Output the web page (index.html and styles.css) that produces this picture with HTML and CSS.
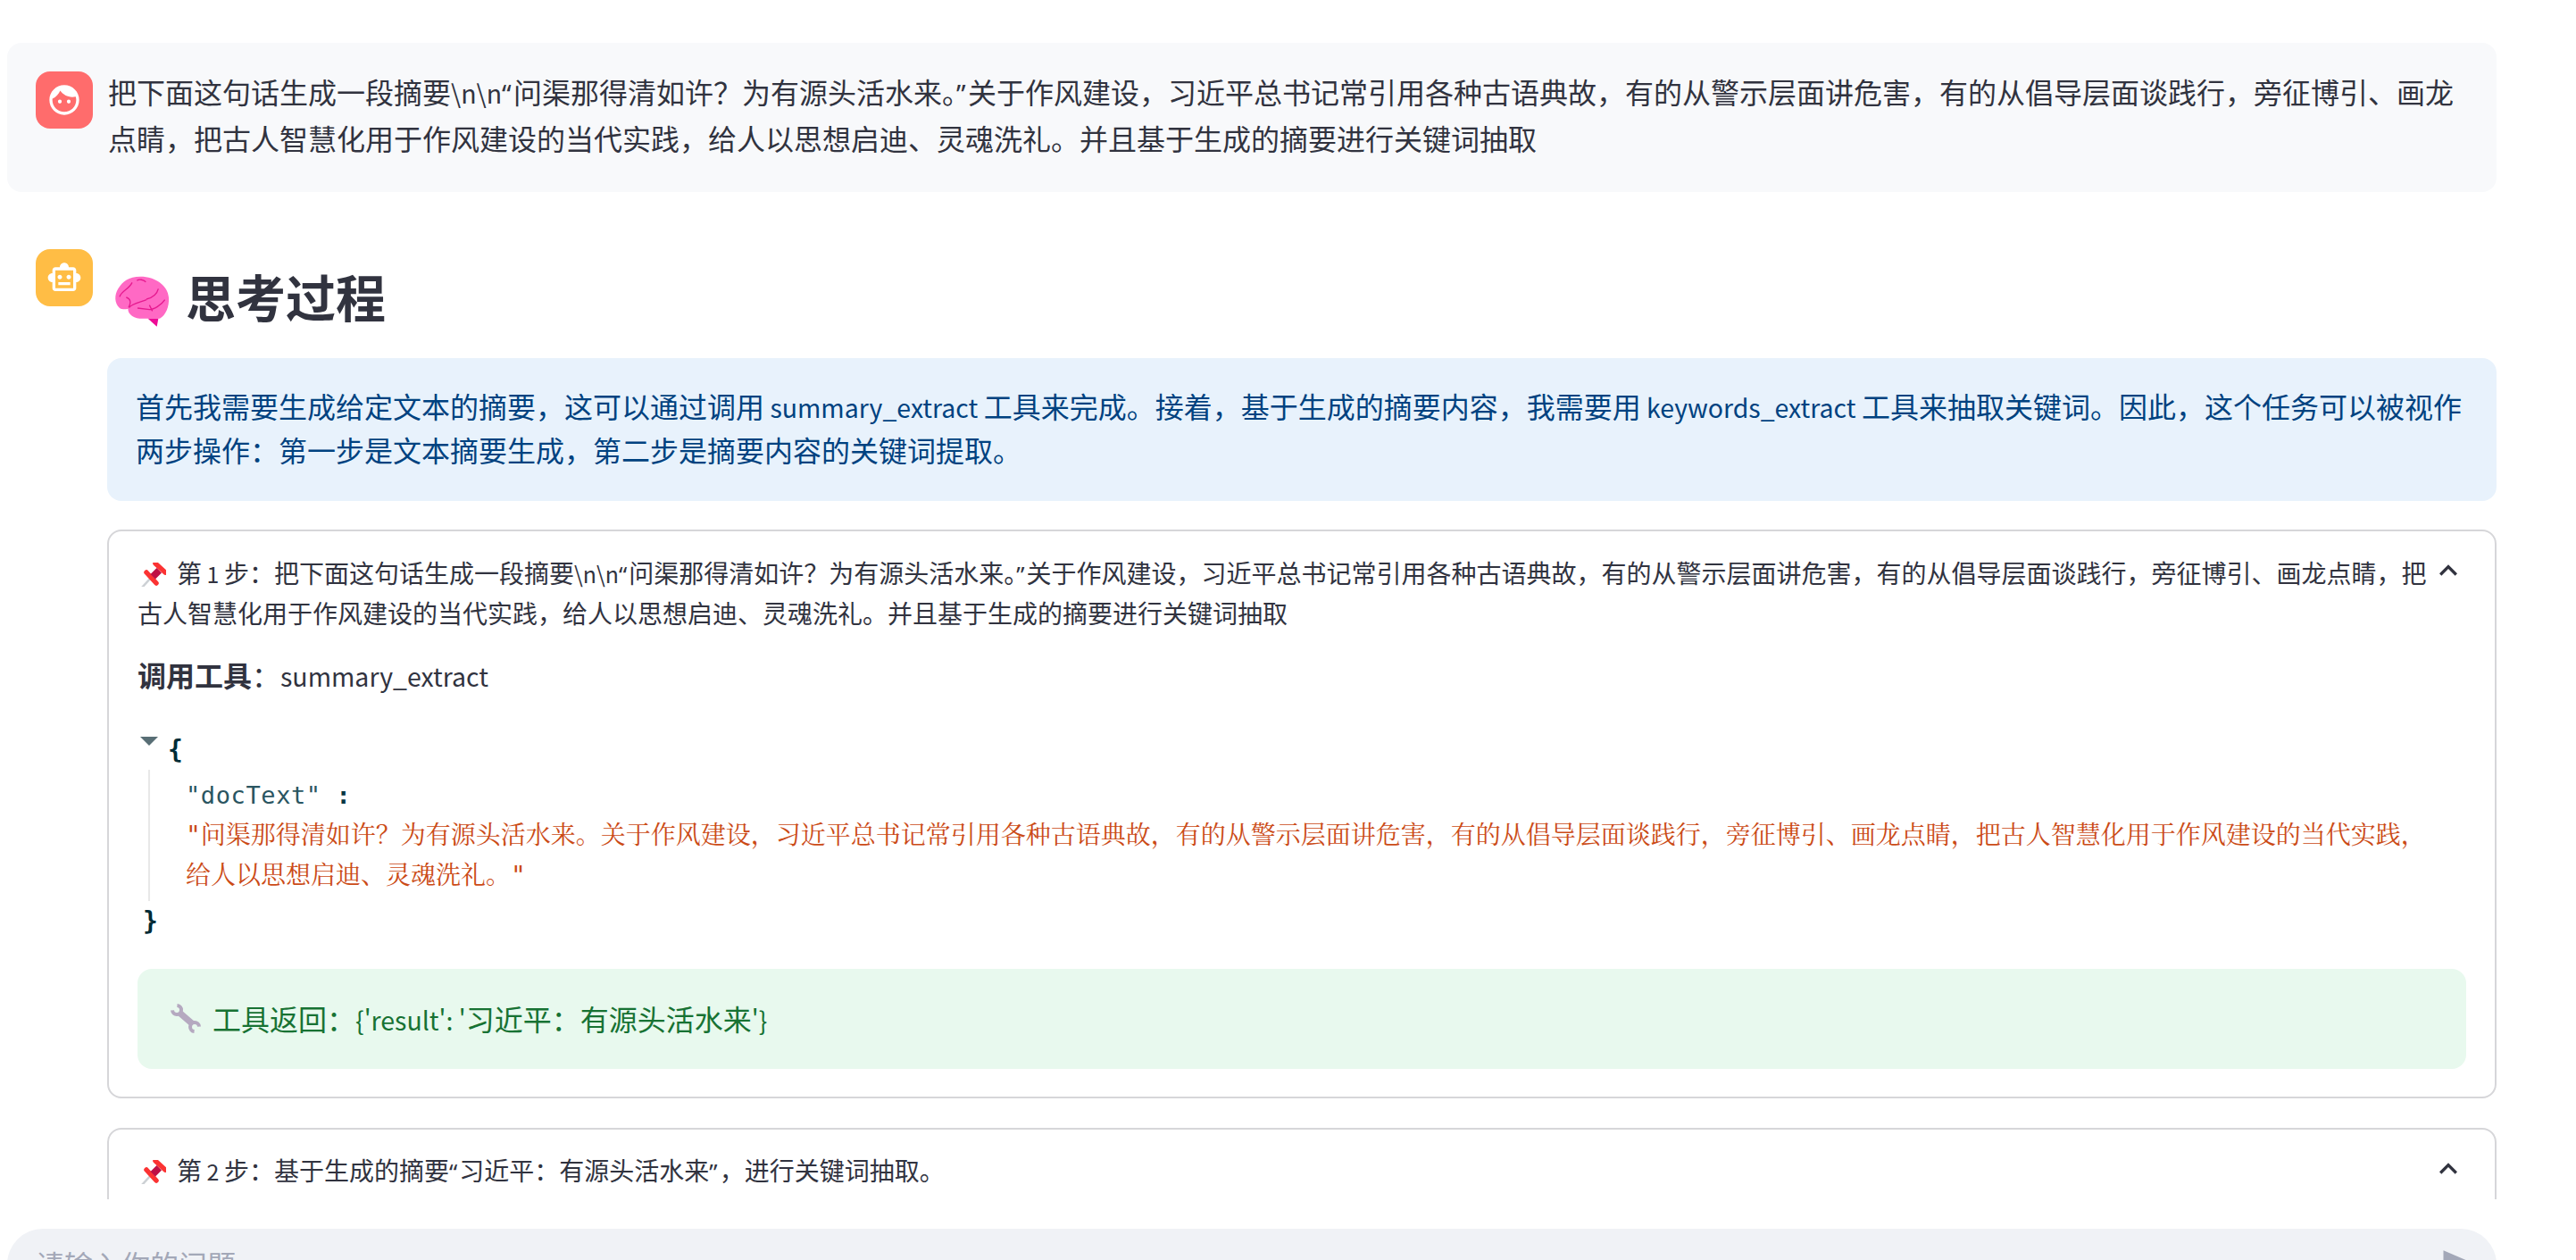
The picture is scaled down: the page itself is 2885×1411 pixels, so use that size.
FILE: index.html
```html
<!DOCTYPE html>
<html lang="zh-CN">
<head>
<meta charset="utf-8">
<title>Chat</title>
<link rel="stylesheet" href="styles.css">
</head>
<body>
<div class="app">
  <main class="scroll">
    <section class="msg msg-user">
      <div class="avatar avatar-user">
        <svg viewBox="0 0 24 24" width="40" height="40" fill="#fff"><path d="M9 11.75c-.69 0-1.25.56-1.25 1.25s.56 1.25 1.25 1.25 1.25-.56 1.25-1.25-.56-1.25-1.25-1.25zm6 0c-.69 0-1.25.56-1.25 1.25s.56 1.25 1.25 1.25 1.25-.56 1.25-1.25-.56-1.25-1.25-1.25zM12 2C6.48 2 2 6.48 2 12s4.48 10 10 10 10-4.48 10-10S17.52 2 12 2zm0 18c-4.41 0-8-3.59-8-8 0-.29.02-.58.05-.86 2.36-1.05 4.23-2.98 5.21-5.37C11.07 8.33 14.05 10 17.42 10c.78 0 1.53-.09 2.25-.26.21.71.33 1.47.33 2.26 0 4.41-3.59 8-8 8z"/></svg>
      </div>
      <p class="msg-text">把下面这句话生成一段摘要<span class="lat">\n\n</span><span class="q">“</span>问渠那得清如许？为有源头活水来。<span class="q">”</span>关于作风建设，习近平总书记常引用各种古语典故，有的从警示层面讲危害，有的从倡导层面谈践行，旁征博引、画龙点睛，把古人智慧化用于作风建设的当代实践，给人以思想启迪、灵魂洗礼。并且基于生成的摘要进行关键词抽取</p>
    </section>
    <section class="msg msg-bot">
      <div class="avatar avatar-bot">
        <svg viewBox="0 0 24 24" width="40" height="40" fill="#fff"><path d="M20 9V7c0-1.1-.9-2-2-2h-3c0-1.66-1.34-3-3-3S9 3.34 9 5H6c-1.1 0-2 .9-2 2v2c-1.66 0-3 1.34-3 3s1.34 3 3 3v4c0 1.1.9 2 2 2h12c1.1 0 2-.9 2-2v-4c1.66 0 3-1.34 3-3s-1.34-3-3-3zm-2 10H6V7h12v12zm-9-6c-.83 0-1.5-.67-1.5-1.5S8.17 10 9 10s1.5.67 1.5 1.5S9.83 13 9 13zm7.5-1.5c0 .83-.67 1.5-1.5 1.5s-1.5-.67-1.5-1.5.67-1.5 1.5-1.5 1.5.67 1.5 1.5zM8 15h8v2H8v-2z"/></svg>
      </div>
      <div class="bot-body">
        <h2 class="heading">
          <svg class="brain" viewBox="0 0 210 192" width="70" height="64"><path d="M100 14C60 14 40 30 25 55 12 75 12 105 30 120c10 6 22 4 28 2 0 23 27 36 57 33h50c20-10 32-40 30-70C193 45 150 14 100 14z" fill="#ff69c4"/><path d="M125 155l35 0-5 27z" fill="#ee0a96"/><path d="M30 82C36 62 60 58 72 34M52 84c14 4 18 16 8 34M88 28c7-6 22-4 30 4M120 90c20-5 35-15 40-35M90 120l40 5c15 0 40-15 52-33M130 110l10 20M62 118c8-13 38-18 58-26" fill="none" stroke="#e6198f" stroke-width="4"/></svg>
          <span>思考过程</span>
        </h2>
        <div class="alert alert-info">首先我需要生成给定文本的摘要，这可以通过调用<span class="lat"> summary_extract </span>工具来完成。接着，基于生成的摘要内容，我需要用<span class="lat"> keywords_extract </span>工具来抽取关键词。因此，这个任务可以被视作两步操作：第一步是文本摘要生成，第二步是摘要内容的关键词提取。</div>
        <article class="card">
          <header class="card-head">
            <p class="card-title"><svg class="pin" viewBox="4 4 28 27" width="28" height="27"><path d="M5 32l10-11" stroke="#ccd0d4" stroke-width="2.5"/><path d="M10 15l11 12M20 5l11 10" stroke="#fb3333" stroke-width="5.5" stroke-linecap="round"/><path d="M21.5 10l5.5 5.5-7 7-5.5-5.5z" fill="#be1045"/></svg>第<span class="lat"> 1 </span>步：把下面这句话生成一段摘要<span class="lat">\n\n</span><span class="q">“</span>问渠那得清如许？为有源头活水来。<span class="q">”</span>关于作风建设，习近平总书记常引用各种古语典故，有的从警示层面讲危害，有的从倡导层面谈践行，旁征博引、画龙点睛，把古人智慧化用于作风建设的当代实践，给人以思想启迪、灵魂洗礼。并且基于生成的摘要进行关键词抽取</p>
            <svg class="chevron" viewBox="0 0 24 24" width="40" height="40" fill="#31333f"><path d="M12 8l-6 6 1.41 1.41L12 10.83l4.59 4.58L18 14z"/></svg>
          </header>
          <p class="tool-line"><strong>调用工具</strong>：<span class="lat">summary_extract</span></p>
          <div class="json">
            <div class="json-open"><span class="caret"></span><span class="brace">{</span></div>
            <div class="json-body">
              <div class="json-key">"docText" <b>:</b></div>
              <div class="json-val">"问渠那得清如许？为有源头活水来。关于作风建设，习近平总书记常引用各种古语典故，有的从警示层面讲危害，有的从倡导层面谈践行，旁征博引、画龙点睛，把古人智慧化用于作风建设的当代实践，给人以思想启迪、灵魂洗礼。"</div>
            </div>
            <div class="json-close">}</div>
          </div>
          <div class="alert alert-ok"><svg class="wrench" viewBox="6 4 34 34" width="34" height="34" fill="none" stroke="#b5a9c0"><path d="M16 15l15 13" stroke-width="7"/><path d="M13.44 7.02A5 5 0 1 1 8.02 12.44M38 30.56A5 5 0 1 0 32.56 35.98" stroke-width="4"/></svg><span>工具返回：<span class="lat">{'result': '</span>习近平：有源头活水来<span class="lat">'}</span></span></div>
        </article>
        <article class="card card-open">
          <header class="card-head">
            <p class="card-title"><svg class="pin" viewBox="4 4 28 27" width="28" height="27"><path d="M5 32l10-11" stroke="#ccd0d4" stroke-width="2.5"/><path d="M10 15l11 12M20 5l11 10" stroke="#fb3333" stroke-width="5.5" stroke-linecap="round"/><path d="M21.5 10l5.5 5.5-7 7-5.5-5.5z" fill="#be1045"/></svg>第<span class="lat"> 2 </span>步：基于生成的摘要<span class="q">“</span>习近平：有源头活水来<span class="q">”</span>，进行关键词抽取。</p>
            <svg class="chevron" viewBox="0 0 24 24" width="40" height="40" fill="#31333f"><path d="M12 8l-6 6 1.41 1.41L12 10.83l4.59 4.58L18 14z"/></svg>
          </header>
        </article>
      </div>
    </section>
  </main>
  <footer class="composer">
    <span class="placeholder">请输入你的问题</span>
    <svg class="send" viewBox="0 0 24 24" width="42" height="42" fill="#a3a8b8"><path d="M2.01 21L23 12 2.01 3 2 10l15 2-15 2z"/></svg>
  </footer>
</div>
</body>
</html>
```
FILE: styles.css
```css
* { box-sizing: border-box; }
html, body { margin: 0; height: 100%; overflow: hidden; background: #fff; }
body { font-family: "Noto Sans CJK SC", "Noto Sans", sans-serif; color: #31333f; }
.app { width: 2885px; height: 1411px; display: flex; flex-direction: column; overflow: hidden; }
.scroll { height: 1343px; flex: none; overflow: hidden; padding: 48px 89px 0 8px; }
.lat { font-size: .89em; line-height: 1; }
.q { font-family: "Noto Sans", sans-serif; font-size: .92em; letter-spacing: .08em; line-height: 1; }
.msg { display: flex; gap: 17px; padding: 32px; border-radius: 16px; }
.msg-user { background: #f8f9fb; height: 167px; }
.msg-bot { gap: 16px; padding-top: 64px; padding-bottom: 0; }
.avatar { flex: none; width: 64px; height: 64px; border-radius: 16px; display: flex; align-items: center; justify-content: center; }
.avatar-user { background: #ff6c6c; }
.avatar-bot { background: #ffbd45; }
.msg-text { margin: -3px 0 0; font-size: 32px; line-height: 51.6px; }
.bot-body { flex: 1; min-width: 0; margin-right: -32px; }
.heading { display: flex; gap: 14px; margin: 16px 0 3px 4px; font-size: 56px; line-height: 72px; font-weight: 700; }
.brain { flex: none; margin-top: 10px; }
.alert { border-radius: 16px; }
.alert-info { margin-top: 32px; padding: 29px 32px 33px; background: #e8f2fc; color: #004280; font-size: 32px; line-height: 49px; }
.card { margin-top: 33px; padding: 24px 32px 31px; border: 2px solid #d6d6d9; border-radius: 16px; background: #fff; }
.alert-info + .card { margin-top: 32px; }
.card-open { min-height: 200px; }
.card-head { display: flex; align-items: flex-start; }
.card-title { flex: 1; margin: 0; font-size: 28px; line-height: 45px; }
.card-open .card-title { margin-top: -1px; }
.pin { margin: 0 12px 0 4px; vertical-align: -4px; }
.chevron { flex: none; }
.tool-line { margin: 21px 0 0; font-size: 32px; line-height: 51.2px; }
.json { margin-top: 36px; padding-right: 30px; font-family: "DejaVu Sans Mono", "Noto Serif CJK SC", monospace; font-size: 28px; line-height: 45px; color: #002b36; }
.json-open { display: flex; align-items: flex-start; }
.caret { flex: none; width: 0; height: 0; margin: 8px 11px 0 3px; border-style: solid; border-width: 10px 10px 0; border-color: #586e75 transparent transparent; }
.brace { font-weight: 700; }
.json-body { margin-left: 12px; padding: 6px 0 6px 40px; border-left: 2px solid #e8e8e8; }
.json-key { color: #2a5561; font-size: 27px; letter-spacing: .6px; }
.json-key b { color: #073642; }
.json-val { color: #cb4b16; }
.json-close { font-weight: 700; margin-left: 6px; }
.alert-ok { display: flex; align-items: center; gap: 13px; margin-top: 31px; padding: 29px 37px 31px; background: #e8f9ee; color: #177233; font-size: 32px; line-height: 52px; }
.wrench { flex: none; }
.composer { flex: none; margin: 33px 89px 0 8px; height: 80px; padding: 14px 21px 14px 32px; background: #f0f2f6; border-radius: 40px; display: flex; justify-content: space-between; color: #a3a8b8; font-size: 32px; line-height: 51px; }
.send { margin: 5px 0 0; flex: none; }
```
